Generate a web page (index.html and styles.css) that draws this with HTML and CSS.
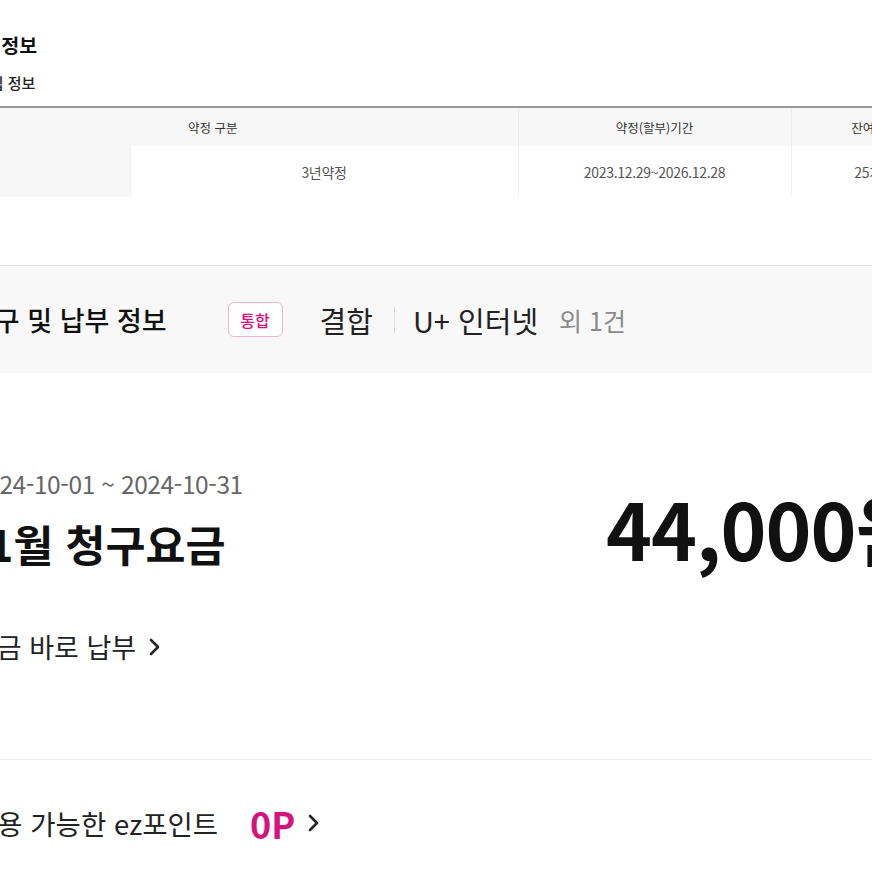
FILE: index.html
```html
<!DOCTYPE html>
<html lang="ko">
<head>
<meta charset="utf-8">
<title>청구 및 납부 정보</title>
<link rel="stylesheet" href="styles.css">
</head>
<body>
<div class="page">
  <section class="agree">
    <h2 class="agree-title">약정 정보</h2>
    <p class="agree-sub">가입 정보</p>
    <table class="agree-table">
      <colgroup>
        <col class="c1"><col class="c2"><col class="c3"><col class="c4">
      </colgroup>
      <thead>
        <tr>
          <th colspan="2">약정 구분</th>
          <th>약정(할부)기간</th>
          <th>잔여기간</th>
        </tr>
      </thead>
      <tbody>
        <tr>
          <th class="row-head">인터넷</th>
          <td>3년약정</td>
          <td>2023.12.29~2026.12.28</td>
          <td>25개월</td>
        </tr>
      </tbody>
    </table>
  </section>

  <section class="bill-head">
    <h2 class="bill-head-title">청구 및 납부 정보</h2>
    <span class="badge">통합</span>
    <span class="combo">결합</span>
    <span class="divider"></span>
    <span class="combo">U+ 인터넷</span>
    <span class="extra">외 1건</span>
  </section>

  <section class="bill">
    <div class="bill-info">
      <p class="period">2024-10-01 ~ 2024-10-31</p>
      <h3 class="bill-title">11월 청구요금</h3>
      <a class="pay-link" href="#">요금 바로 납부
        <svg class="chev" width="14" height="22" viewBox="0 0 14 22"><path d="M3 4l7 7-7 7" fill="none" stroke="#222" stroke-width="2.6" stroke-linecap="round" stroke-linejoin="round"/></svg>
      </a>
    </div>
    <div class="bill-amount">44,000원</div>
  </section>

  <section class="point">
    <span class="point-label">이용 가능한 ez포인트</span>
    <span class="point-value">0P</span>
    <svg class="chev" width="14" height="22" viewBox="0 0 14 22"><path d="M3 4l7 7-7 7" fill="none" stroke="#222" stroke-width="2.6" stroke-linecap="round" stroke-linejoin="round"/></svg>
  </section>
</div>
</body>
</html>
```
FILE: styles.css
```css
html, body {
  margin: 0;
  padding: 0;
  background: #fff;
}
body {
  width: 872px;
  height: 872px;
  overflow: hidden;
  font-family: "Noto Sans CJK KR", "Noto Sans", sans-serif;
  color: #111;
}
.page {
  width: 872px;
  overflow: hidden;
}

/* 약정 정보 */
.agree {
  padding-top: 32px;
}
.agree-title {
  margin: 0 0 0 -40px;
  font-size: 19.5px;
  line-height: 26px;
  font-weight: 700;
  color: #111;
}
.agree-sub {
  margin: 15px 0 0 -24px;
  font-size: 15px;
  line-height: 20px;
  font-weight: 500;
  color: #222;
}
.agree-table {
  margin: 13px 0 0 -92px;
  border-collapse: collapse;
  table-layout: fixed;
  width: 1049px;
  border-top: 2px solid #9a9a9a;
}
.agree-table .c1 { width: 222px; }
.agree-table .c2 { width: 388px; }
.agree-table .c3 { width: 273px; }
.agree-table .c4 { width: 166px; }
.agree-table thead th {
  height: 38px;
  padding: 0;
  background: #f7f7f7;
  font-size: 12.5px;
  font-weight: 400;
  color: #333;
  text-align: center;
  border-left: 1px solid #ececec;
}
.agree-table thead th:first-child { border-left: 0; }
.agree-table tbody td,
.agree-table tbody th {
  height: 51px;
  padding: 0;
  text-align: center;
  font-size: 14px;
  font-weight: 400;
  color: #555;
  border-left: 1px solid #f1f1f1;
  letter-spacing: -0.3px;
}
.agree-table .row-head {
  background: #f7f7f7;
  border-left: 0;
  color: #f7f7f7;
}

/* 청구 및 납부 정보 헤더 */
.bill-head {
  margin-top: 68px;
  border-top: 1px solid #e2e2e2;
  background: #f8f8f8;
  height: 107px;
  display: flex;
  align-items: center;
  white-space: nowrap;
}
.bill-head-title {
  margin: 0 0 0 -30px;
  font-size: 27px;
  line-height: 36px;
  font-weight: 500;
  color: #111;
}
.badge {
  margin-left: 61px;
  width: 55px;
  height: 35px;
  box-sizing: border-box;
  border: 1px solid #f0b3d2;
  border-radius: 6px;
  background: #fff;
  color: #d8117d;
  font-size: 16px;
  font-weight: 500;
  display: flex;
  align-items: center;
  justify-content: center;
}
.combo {
  font-size: 29px;
  line-height: 38px;
  color: #222;
}
.badge + .combo { margin-left: 37px; }
.divider {
  width: 1px;
  height: 26px;
  background: #ddd;
  margin: 0 18px 0 21px;
}
.extra {
  margin-left: 21px;
  font-size: 25px;
  color: #8a8a8a;
}

/* 청구 */
.bill {
  display: flex;
  align-items: flex-start;
  padding-top: 95px;
  height: 387px;
  box-sizing: border-box;
  border-bottom: 1px solid #eee;
}
.bill-info {
  flex: 0 0 606px;
}
.period {
  margin: 0 0 0 -27px;
  font-size: 24.5px;
  line-height: 32px;
  color: #666;
  letter-spacing: -0.4px;
}
.bill-title {
  margin: 16px 0 0 -38px;
  font-size: 43.5px;
  line-height: 56px;
  font-weight: 700;
  color: #111;
}
.pay-link {
  margin: 57px 0 0 -28px;
  display: flex;
  align-items: center;
  gap: 12px;
  font-size: 27px;
  line-height: 36px;
  color: #222;
  text-decoration: none;
}
.bill-amount {
  margin-top: 14px;
  font-size: 78px;
  line-height: 90px;
  font-weight: 700;
  color: #111;
  white-space: nowrap;
  letter-spacing: -1px;
}

/* 포인트 */
.point {
  display: flex;
  align-items: center;
  height: 126px;
  white-space: nowrap;
}
.point-label {
  margin-left: -28px;
  font-size: 27.5px;
  line-height: 40px;
  color: #222;
}
.point-value {
  margin-left: 32px;
  font-size: 36px;
  line-height: 40px;
  font-weight: 700;
  color: #d6127f;
}
.point .chev { margin-left: 12px; }
```
